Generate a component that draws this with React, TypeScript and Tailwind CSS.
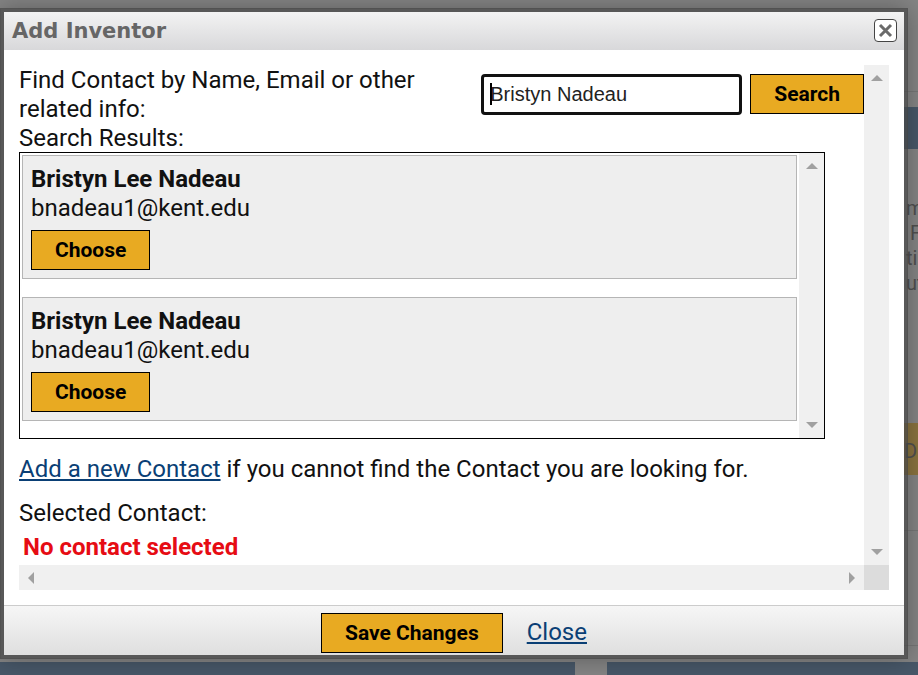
import { useState } from "react";

type Contact = { id: number; name: string; email: string };

const contacts: Contact[] = [
  { id: 1, name: "Bristyn Lee Nadeau", email: "bnadeau1@kent.edu" },
  { id: 2, name: "Bristyn Lee Nadeau", email: "bnadeau1@kent.edu" },
];

const arrows = {
  up: "M0 6 L6 0 L12 6 Z",
  down: "M0 0 L12 0 L6 6 Z",
  left: "M6 0 L6 12 L0 6 Z",
  right: "M0 0 L6 6 L0 12 Z",
};

const Arrow = ({ dir }: { dir: keyof typeof arrows }) => {
  const vertical = dir === "up" || dir === "down";
  return (
    <svg
      width={vertical ? 12 : 6}
      height={vertical ? 6 : 12}
      className="shrink-0 fill-[#a0a0a0]"
      aria-hidden="true"
    >
      <path d={arrows[dir]} />
    </svg>
  );
};

const VerticalScrollbar = () => (
  <div className="flex w-[25px] shrink-0 flex-col items-center justify-between bg-[#f0f0f0] py-2.5">
    <Arrow dir="up" />
    <Arrow dir="down" />
  </div>
);

const GoldButton = ({ children }: { children: string }) => (
  <button
    type="button"
    className="h-10 shrink-0 border border-black bg-[#e8aa22] px-[23px] text-[21px] leading-6 font-bold text-black"
  >
    {children}
  </button>
);

// Dimmed page underneath the dialog
const PageBehind = () => (
  <div
    className="col-start-1 row-start-1 flex flex-col overflow-hidden bg-[#858585]"
    aria-hidden="true"
  >
    <div className="flex h-[662px] flex-col items-end text-xl leading-[25px] text-[#505050]">
      <div className="h-[92px] w-[14px] shrink-0 border-b border-[#777]" />
      <div className="mt-[15px] h-[42px] w-[14px] shrink-0 bg-[#485869]" />
      <div className="mt-[47px] flex w-[14px] flex-col pl-0.5 whitespace-nowrap">
        <span>m</span>
        <span className="pl-1">F</span>
        <span>ti</span>
        <span>ut</span>
      </div>
      <div className="mt-[127px] flex h-[52px] w-[14px] shrink-0 items-center bg-[#8b7440] pt-1">
        De
      </div>
      <div className="h-[56px] w-[14px] shrink-0 border-b border-[#777]" />
      <div className="h-[115px] w-[14px] shrink-0 border-b border-[#777]" />
    </div>
    <div className="flex grow gap-8">
      <div className="w-[575px] bg-[#485869]" />
      <div className="grow bg-[#485869]" />
    </div>
  </div>
);

const ContactCard = ({ contact }: { contact: Contact }) => (
  <li className="border border-[#b5b5b5] bg-[#eee] px-2 pt-[9px] pb-2">
    <p className="font-bold">{contact.name}</p>
    <p className="mb-[7px]">{contact.email}</p>
    <GoldButton>Choose</GoldButton>
  </li>
);

const App = () => {
  const [query, setQuery] = useState("Bristyn Nadeau");

  return (
    <div className="grid min-h-screen grid-cols-1 font-[Roboto,sans-serif] text-2xl leading-[29px] text-[#111]">
      <PageBehind />

      <div className="z-10 col-start-1 row-start-1 pt-2 pr-2.5 pb-4">
        <div
          role="dialog"
          aria-labelledby="dialog-title"
          className="border-4 border-[#444]/70 bg-white bg-clip-padding shadow-[0_0_24px_rgba(0,0,0,0.3)]"
        >
          {/* Title bar */}
          <div className="flex h-[38px] items-center justify-between bg-linear-to-b from-[#f3f3f3] to-[#d8d8da] pr-[7px] pb-0.5 pl-2">
            <h1
              id="dialog-title"
              className="pt-0.5 font-['DejaVu_Sans',sans-serif] text-[21px] font-bold text-[#666]"
            >
              Add Inventor
            </h1>
            <button
              type="button"
              aria-label="Close dialog"
              className="flex size-[23px] items-center justify-center rounded-[4px] border border-[#444] bg-white"
            >
              <svg width="15" height="15" viewBox="0 0 15 15" aria-hidden="true">
                <path
                  d="M2 2 L13 13 M13 2 L2 13"
                  stroke="#6a6a6a"
                  strokeWidth="3"
                />
              </svg>
            </button>
          </div>

          {/* Scrolling body */}
          <div className="p-[15px]">
            <div className="flex">
              <div className="min-w-0 grow">
                <div className="flex">
                  <label htmlFor="contact-search" className="flex-1 pt-px pr-4">
                    Find Contact by Name, Email or other related info:
                  </label>
                  <div className="flex items-start gap-2 pt-[9px]">
                    <div className="relative">
                      <input
                        id="contact-search"
                        type="text"
                        value={query}
                        onChange={(e) => setQuery(e.target.value)}
                        className="block h-[41px] w-[261px] rounded border-[3px] border-[#111] bg-white px-1.5 font-['Liberation_Sans',sans-serif] text-xl text-[#222] outline-none"
                      />
                      <span className="absolute top-[9px] left-[9px] h-[22px] w-0.5 bg-black" />
                    </div>
                    <GoldButton>Search</GoldButton>
                  </div>
                </div>
                <h2 className="h-7">Search Results:</h2>
                <div className="mr-[39px] flex h-[287px] border border-black">
                  <ul className="flex grow flex-col gap-[18px] p-0.5">
                    {contacts.map((contact) => (
                      <ContactCard key={contact.id} contact={contact} />
                    ))}
                  </ul>
                  <VerticalScrollbar />
                </div>
                <p className="mt-4">
                  <a href="#new-contact" className="text-[#0a3f75] underline">
                    Add a new Contact
                  </a>{" "}
                  if you cannot find the Contact you are looking for.
                </p>
                <h2 className="mt-[15px]">Selected Contact:</h2>
                <p className="mt-[5px] mb-[3px] pl-1 font-bold text-[#e60c14]">
                  No contact selected
                </p>
              </div>
              <VerticalScrollbar />
            </div>
            <div className="flex h-[25px]">
              <div className="flex grow items-center justify-between bg-[#f0f0f0] px-[9px]">
                <Arrow dir="left" />
                <Arrow dir="right" />
              </div>
              <div className="w-[25px] bg-[#dcdcdc]" />
            </div>
          </div>

          {/* Footer */}
          <div className="flex h-[50px] items-center justify-center gap-6 border-t border-[#ccc] bg-linear-to-b from-[#f6f6f6] to-[#dfdfdf] pt-1">
            <GoldButton>Save Changes</GoldButton>
            <a href="#close" className="text-[#0a3f75] underline">
              Close
            </a>
          </div>
        </div>
      </div>
    </div>
  );
};

export default App;
